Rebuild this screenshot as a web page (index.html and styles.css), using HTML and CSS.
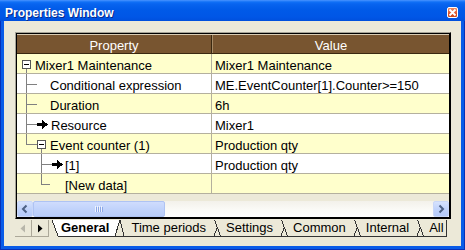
FILE: index.html
```
<!DOCTYPE html>
<html>
<head>
<meta charset="utf-8">
<link rel="stylesheet" href="styles.css">
</head>
<body>
<div class="window">
  <div class="titlebar">
    <span class="title">Properties Window</span>
    <span class="close"><svg width="9" height="9" viewBox="0 0 9 9"><path d="M1.5 1.5 L7.5 7.5 M7.5 1.5 L1.5 7.5" stroke="#fff" stroke-width="1.8" fill="none"/></svg></span>
  </div>
  <div class="client">
    <div class="frame">
      <div class="frame-in">
        <div class="hdr">
          <div class="hcell hc1">Property</div>
          <div class="hcell hc2">Value</div>
        </div>
        <div class="row y">
          <div class="cell c1"><svg class="tree" width="18" height="19" shape-rendering="crispEdges"><rect x="5.5" y="6.5" width="8" height="8" fill="#fff" stroke="#555"/><line x1="7" y1="10.5" x2="12" y2="10.5" stroke="#000"/><line x1="9.5" y1="15" x2="9.5" y2="19" stroke="#808080"/></svg><span class="txt">Mixer1 Maintenance</span></div>
          <div class="cell c2">Mixer1 Maintenance</div>
        </div>
        <div class="row w">
          <div class="cell c1"><svg class="tree" width="33" height="19" shape-rendering="crispEdges"><line x1="9.5" y1="0" x2="9.5" y2="19" stroke="#808080"/><line x1="9" y1="10.5" x2="20" y2="10.5" stroke="#808080"/></svg><span class="txt">Conditional expression</span></div>
          <div class="cell c2">ME.EventCounter[1].Counter&gt;=150</div>
        </div>
        <div class="row y">
          <div class="cell c1"><svg class="tree" width="33" height="19" shape-rendering="crispEdges"><line x1="9.5" y1="0" x2="9.5" y2="19" stroke="#808080"/><line x1="9" y1="10.5" x2="20" y2="10.5" stroke="#808080"/></svg><span class="txt">Duration</span></div>
          <div class="cell c2">6h</div>
        </div>
        <div class="row w">
          <div class="cell c1"><svg class="tree" width="34" height="19" shape-rendering="crispEdges"><line x1="9.5" y1="0" x2="9.5" y2="19" stroke="#808080"/><line x1="9" y1="10.5" x2="20" y2="10.5" stroke="#808080"/><rect x="20" y="9" width="5" height="3" fill="#000"/><polygon points="25,6 31,10.5 25,15" fill="#000"/></svg><span class="txt">Resource</span></div>
          <div class="cell c2">Mixer1</div>
        </div>
        <div class="row y">
          <div class="cell c1"><svg class="tree" width="33" height="19" shape-rendering="crispEdges"><line x1="9.5" y1="0" x2="9.5" y2="10.5" stroke="#808080"/><line x1="9" y1="10.5" x2="20" y2="10.5" stroke="#808080"/><rect x="20.5" y="6.5" width="8" height="8" fill="#fff" stroke="#555"/><line x1="22" y1="10.5" x2="27" y2="10.5" stroke="#000"/><line x1="24.5" y1="15" x2="24.5" y2="19" stroke="#808080"/></svg><span class="txt">Event counter (1)</span></div>
          <div class="cell c2">Production qty</div>
        </div>
        <div class="row w">
          <div class="cell c1"><svg class="tree" width="48" height="19" shape-rendering="crispEdges"><line x1="24.5" y1="0" x2="24.5" y2="19" stroke="#808080"/><line x1="24" y1="10.5" x2="35" y2="10.5" stroke="#808080"/><rect x="35" y="9" width="5" height="3" fill="#000"/><polygon points="40,6 46,10.5 40,15" fill="#000"/></svg><span class="txt">[1]</span></div>
          <div class="cell c2">Production qty</div>
        </div>
        <div class="row y">
          <div class="cell c1"><svg class="tree" width="48" height="19" shape-rendering="crispEdges"><line x1="24.5" y1="0" x2="24.5" y2="10.5" stroke="#808080"/><line x1="24" y1="10.5" x2="33" y2="10.5" stroke="#808080"/></svg><span class="txt">[New data]</span></div>
          <div class="cell c2"></div>
        </div>
        <div class="filler"></div>
        <div class="hscroll">
          <div class="sbtn"><svg width="14" height="14" viewBox="0 0 14 14"><path d="M8.5 3.5 L5 7 L8.5 10.5" stroke="#4d6185" stroke-width="2" fill="none"/></svg></div>
          <div class="thumb"><svg width="8" height="6" shape-rendering="crispEdges"><g stroke="#eef3fe"><line x1="0.5" y1="0" x2="0.5" y2="6"/><line x1="2.5" y1="0" x2="2.5" y2="6"/><line x1="4.5" y1="0" x2="4.5" y2="6"/><line x1="6.5" y1="0" x2="6.5" y2="6"/></g><g stroke="#8ca7e6"><line x1="1.5" y1="1" x2="1.5" y2="7"/><line x1="3.5" y1="1" x2="3.5" y2="7"/><line x1="5.5" y1="1" x2="5.5" y2="7"/><line x1="7.5" y1="1" x2="7.5" y2="7"/></g></svg></div>
          <div class="track"></div>
          <div class="sbtn"><svg width="14" height="14" viewBox="0 0 14 14"><path d="M5.5 3.5 L9 7 L5.5 10.5" stroke="#4d6185" stroke-width="2" fill="none"/></svg></div>
        </div>
      </div>
    </div>
    <div class="tabbar">
      <div class="nav"><svg width="8" height="9" viewBox="0 0 8 9"><polygon points="6,0.5 1.5,4.5 6,8.5" fill="#b8b6aa"/></svg></div>
      <div class="nav"><svg width="8" height="9" viewBox="0 0 8 9"><polygon points="2,0.5 6.5,4.5 2,8.5" fill="#000"/></svg></div>
      <div class="tabs">
        <svg class="sep" width="11" height="17" shape-rendering="crispEdges"><polygon points="3,0 11,0 11,16 9,16" fill="#fff"/><line x1="3" y1="0" x2="9" y2="16" stroke="#333"/><line x1="9" y1="16.5" x2="11" y2="16.5" stroke="#333"/></svg>
        <span class="tab active">General</span>
        <svg class="sep" width="14" height="17" shape-rendering="crispEdges"><polygon points="0,0 8,0 3,16 0,16" fill="#fff"/><line x1="3" y1="16" x2="8" y2="0" stroke="#333"/><line x1="8" y1="0" x2="12" y2="16" stroke="#333"/><line x1="0" y1="16.5" x2="14" y2="16.5" stroke="#333"/></svg>
        <span class="tab first">Time periods</span>
        <svg class="sep" width="14" height="17" shape-rendering="crispEdges"><line x1="5.5" y1="0" x2="11.5" y2="16" stroke="#333"/><line x1="5" y1="16" x2="8.3" y2="7.5" stroke="#333"/><line x1="0" y1="16.5" x2="14" y2="16.5" stroke="#333"/></svg>
        <span class="tab">Settings</span>
        <svg class="sep" width="14" height="17" shape-rendering="crispEdges"><line x1="5.5" y1="0" x2="11.5" y2="16" stroke="#333"/><line x1="5" y1="16" x2="8.3" y2="7.5" stroke="#333"/><line x1="0" y1="16.5" x2="14" y2="16.5" stroke="#333"/></svg>
        <span class="tab">Common</span>
        <svg class="sep" width="14" height="17" shape-rendering="crispEdges"><line x1="5.5" y1="0" x2="11.5" y2="16" stroke="#333"/><line x1="5" y1="16" x2="8.3" y2="7.5" stroke="#333"/><line x1="0" y1="16.5" x2="14" y2="16.5" stroke="#333"/></svg>
        <span class="tab">Internal</span>
        <svg class="sep" width="14" height="17" shape-rendering="crispEdges"><line x1="5.5" y1="0" x2="11.5" y2="16" stroke="#333"/><line x1="5" y1="16" x2="8.3" y2="7.5" stroke="#333"/><line x1="0" y1="16.5" x2="14" y2="16.5" stroke="#333"/></svg>
        <span class="tab last">All</span>
      </div>
    </div>
  </div>
</div>
</body>
</html>
```
FILE: styles.css
```
html, body {
  margin: 0;
  padding: 0;
}
body {
  width: 465px;
  height: 250px;
  overflow: hidden;
  font-family: "Liberation Sans", Arial, sans-serif;
  font-size: 13px;
  color: #000;
}
.window {
  width: 465px;
  height: 250px;
  box-sizing: border-box;
  display: flex;
  flex-direction: column;
  background: #0a5ce8;
  box-shadow: inset 1px 0 0 #0831b8, inset -1px 0 0 #0831b8, inset 0 -1px 0 #0831b8;
}
.titlebar {
  height: 21px;
  flex: none;
  display: flex;
  align-items: flex-start;
  background: linear-gradient(to bottom, #4a94ff 0px, #1070f6 2px, #0864ef 4px, #005ae8 10px, #0056e6 17px, #0050dc 21px);
}
.title {
  font-weight: bold;
  font-size: 12px;
  line-height: 14px;
  padding-top: 6px;
  padding-left: 5px;
  color: #fff;
  text-shadow: 1px 1px 0 #0a2a8a;
  flex: 1;
}
.close {
  width: 11px;
  height: 11px;
  margin-top: 7px;
  margin-right: 7px;
  box-sizing: border-box;
  border: 1px solid #fff;
  border-radius: 2px;
  background: linear-gradient(to bottom, #f08a60, #e0552c 60%, #cc4418);
  display: flex;
  align-items: center;
  justify-content: center;
}
.close svg { display: block; }
.client {
  flex: 1;
  margin: 0 4px 4px 4px;
  background: #ece9d8;
  padding: 11px 10px 0 11px;
  display: flex;
  flex-direction: column;
}
.frame {
  height: 187px;
  box-sizing: border-box;
  border: 1px solid;
  border-color: #a6a396 #000 #000 #a6a396;
  display: flex;
}
.frame-in {
  flex: 1;
  border: 1px solid #000;
  display: flex;
  flex-direction: column;
  background: #ece9d8;
}
.hdr {
  height: 20px;
  flex: none;
  box-sizing: border-box;
  display: flex;
  background: #785530;
  color: #fff;
  border-top: 1px solid #d9ccb3;
  border-bottom: 1px solid #3a2810;
}
.hcell {
  text-align: center;
  line-height: 15px;
  padding-top: 3px;
  box-sizing: border-box;
}
.hc1 {
  width: 195px;
  border-right: 1px solid #3a2810;
}
.hc2 {
  flex: 1;
  border-left: 1px solid #a58a66;
}
.row {
  height: 20px;
  flex: none;
  box-sizing: border-box;
  display: flex;
  border-bottom: 1px solid #b4b09e;
}
.row.y { background: #ffffcc; }
.row.w { background: #fff; }
.cell {
  white-space: nowrap;
  overflow: hidden;
}
.c1 {
  width: 195px;
  box-sizing: border-box;
  border-right: 1px solid #b4b09e;
  display: flex;
}
.tree { display: block; flex: none; }
.txt, .c2 {
  line-height: 15px;
  padding-top: 4px;
}
.c2 {
  flex: 1;
  padding-left: 3px;
}
.filler {
  height: 7px;
  flex: none;
}
.hscroll {
  height: 16px;
  flex: none;
  display: flex;
  background: linear-gradient(to bottom, #f3f1ea, #fbfbf8 60%, #fefefe);
}
.sbtn {
  width: 16px;
  height: 16px;
  box-sizing: border-box;
  border: 1px solid #c9d7f8;
  border-radius: 2px;
  background: linear-gradient(to bottom, #d6e2fd, #c1d3fb 50%, #b5cafa);
  display: flex;
  align-items: center;
  justify-content: center;
}
.sbtn svg { display: block; }
.thumb {
  width: 132px;
  height: 16px;
  box-sizing: border-box;
  border: 1px solid #aec3f3;
  border-radius: 2px;
  background: linear-gradient(to bottom, #cfdcfd, #c1d3fb 50%, #b8ccf9);
  display: flex;
  align-items: center;
  justify-content: center;
}
.thumb svg { display: block; }
.track { flex: 1; }
.tabbar {
  height: 18px;
  flex: none;
  display: flex;
  padding-top: 1px;
}
.nav {
  width: 17px;
  height: 17px;
  box-sizing: border-box;
  border-right: 1px solid #aca899;
  border-bottom: 1px solid #aca899;
  background: #ece9d8;
  display: flex;
  align-items: center;
  justify-content: center;
}
.nav svg { display: block; }
.tabs {
  display: flex;
  height: 17px;
}
.sep { display: block; flex: none; }
.tab {
  height: 17px;
  box-sizing: border-box;
  border-bottom: 1px solid #333;
  line-height: 16px;
  padding: 0 3px;
  white-space: nowrap;
}
.tab.active {
  background: #fff;
  font-weight: bold;
  padding: 0 3px 0 1px;
}
.tab.first { padding-left: 5px; }
.tab.last { border-right: 1px solid #333; padding-right: 2px; }
```
